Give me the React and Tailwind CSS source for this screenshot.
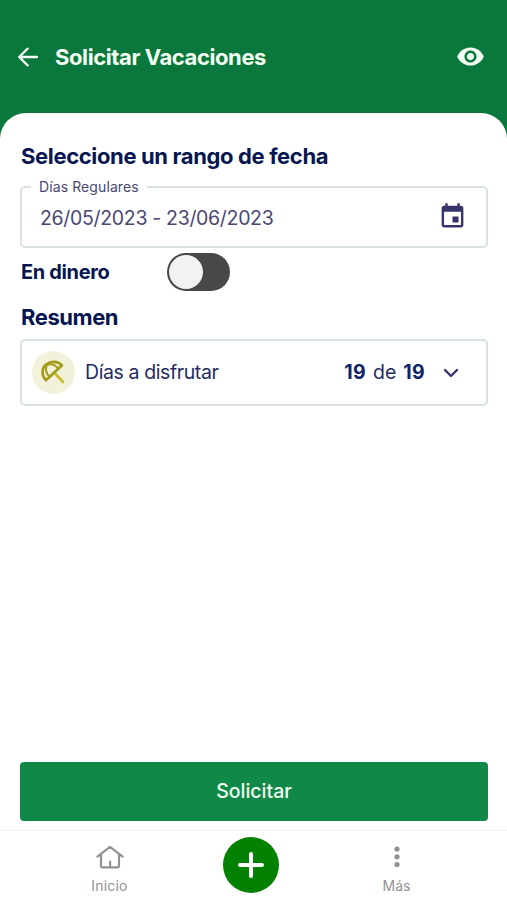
import { MdEvent, MdVisibility } from "react-icons/md";

function BackIcon() {
  return (
    <svg width="20" height="20" viewBox="0 0 20 20" fill="none" stroke="currentColor" strokeWidth="2.3" strokeLinecap="round" strokeLinejoin="round">
      <path d="M19 10H1.4M9.6 1.6 1.2 10l8.4 8.4" />
    </svg>
  );
}

function UmbrellaIcon() {
  return (
    <svg width="43" height="43" viewBox="22 18 129 129" fill="none" strokeLinecap="round" strokeLinejoin="round">
      <path d="M88 82 115 111" stroke="#c9bd2c" strokeWidth="8" />
      <path d="M64 106C50 92 51 69 64 59 78 47 99 48 112 61Z" stroke="#a19d18" strokeWidth="8" />
      <path d="M66 60C62 74 66 88 75 95M68 59C82 56 94 62 100 71" stroke="#a19d18" strokeWidth="6" />
    </svg>
  );
}

function HomeIcon() {
  return (
    <svg width="28" height="24" viewBox="0 0 28 24" fill="none" stroke="currentColor" strokeWidth="2.2" strokeLinecap="round" strokeLinejoin="round">
      <path d="M1.4 11.6 14 1.8l12.6 9.8M5 9.2v11.6q0 1.6 1.6 1.6h14.8q1.6 0 1.6-1.6V9.2M14.1 16.6v5.6" />
    </svg>
  );
}

function Header() {
  return (
    <header className="flex h-[113px] shrink-0 items-center bg-[#0a773c] pl-[18px] pr-[22px] text-[#f3fff2]">
      <BackIcon />
      <h1 className="ml-[17px] mt-px flex-1 text-[22px] font-bold tracking-[-0.41px]">Solicitar Vacaciones</h1>
      <MdVisibility size={29} />
    </header>
  );
}

function DateField() {
  return (
    <fieldset className="mt-[7px] h-[71px] rounded-[5px] border-2 border-[#d9e1e1] pl-[9px] pr-[19px] text-[#4b4773]">
      <legend className="px-2 text-[14px] leading-[20px] tracking-[0.1px]">Días Regulares</legend>
      <div className="flex h-[47px] justify-between pl-[9px]">
        <span className="mt-[6px] text-[19.5px] leading-[30px] tracking-[-0.32px]">26/05/2023 - 23/06/2023</span>
        <MdEvent size={29} className="mt-[5px] text-[#37336b]" />
      </div>
    </fieldset>
  );
}

function BottomNav() {
  return (
    <nav className="flex h-[70px] shrink-0 justify-center border-t border-[#f2f4f3] pl-[3px] text-[#929292]">
      <a className="flex w-[141px] flex-col items-center pt-[14px]">
        <HomeIcon />
        <span className="mt-[7px] text-[14px] leading-[20px] tracking-[0.2px]">Inicio</span>
      </a>
      <a className="mt-[6px] flex h-14 w-[142px] justify-center">
        <span className="flex size-14 items-center justify-center rounded-full bg-[#038103] text-white">
          <svg width="28" height="28" viewBox="0 0 28 28" stroke="currentColor" strokeWidth="4" strokeLinecap="round">
            <path d="M14 3v22M3 14h22" />
          </svg>
        </span>
      </a>
      <a className="flex w-[149px] flex-col items-center pt-[14px]">
        <svg width="6" height="24" viewBox="0 0 6 24" fill="currentColor">
          <circle cx="3" cy="4" r="2.6" />
          <circle cx="3" cy="11.8" r="2.6" />
          <circle cx="3" cy="19.6" r="2.6" />
        </svg>
        <span className="mt-[7px] text-[14px] leading-[20px] tracking-[0.1px]">Más</span>
      </a>
    </nav>
  );
}

export default function App() {
  return (
    <div className="flex h-[900px] w-full flex-col overflow-hidden bg-[#0a773c] font-['Inter',sans-serif] text-[#07164f]">
      <Header />
      <div className="flex flex-1 flex-col rounded-t-[26px] bg-white">
        <main className="flex flex-1 flex-col pl-5 pr-[19px] pt-[29px]">
          <h2 className="pl-px text-[22px] font-bold leading-[28px] tracking-[-0.36px]">Seleccione un rango de fecha</h2>
          <DateField />
          <div className="mt-1 flex h-10 items-center pl-px">
            <span className="w-[146px] text-[20px] font-bold tracking-[-0.35px]">En dinero</span>
            <button className="flex h-[38px] w-[63px] items-center rounded-full bg-[#484848] p-[2px]">
              <span className="size-[34px] rounded-full bg-[#f2f2f2]" />
            </button>
          </div>
          <h2 className="mt-[11px] pl-px text-[22px] font-bold leading-[28px] tracking-[-0.45px]">Resumen</h2>
          <div className="mt-2 flex h-[67px] items-center rounded-[5px] border-2 border-[#d9e1e1] pl-[10px] pr-[27px] text-[19.5px] text-[#242b62]">
            <span className="size-[43px] rounded-full bg-[#f3f1db]">
              <UmbrellaIcon />
            </span>
            <span className="ml-[10px] mt-px flex-1 tracking-[-0.4px]">Días a disfrutar</span>
            <span className="mr-[18px] mt-px flex gap-[7px]">
              <b className="font-bold tracking-[0.3px] text-[#10246b]">19</b>
              <span>de</span>
              <b className="font-bold tracking-[0.3px] text-[#10246b]">19</b>
            </span>
            <svg width="16" height="10" viewBox="0 0 16 10" fill="none" stroke="#37336b" strokeWidth="2.4" strokeLinecap="round" strokeLinejoin="round">
              <path d="m2 2 6 6 6-6" />
            </svg>
          </div>
          <button className="mb-[9px] mt-auto h-[59px] rounded-[4px] bg-[#108948] pt-px text-[19.5px] font-medium text-[#f0fff0]">Solicitar</button>
        </main>
        <BottomNav />
      </div>
    </div>
  );
}
